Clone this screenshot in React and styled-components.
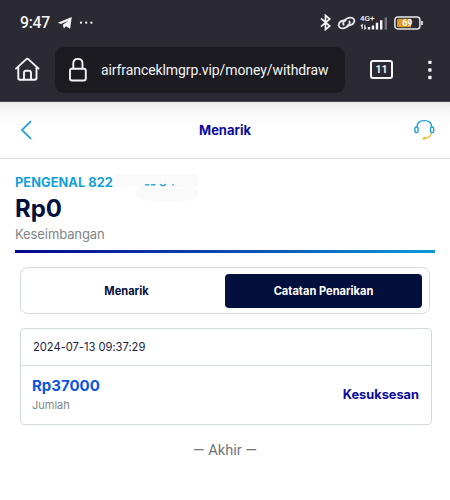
import React from 'react';
import styled, { createGlobalStyle } from 'styled-components'

const GlobalStyle = createGlobalStyle`
  * {
    box-sizing:border-box;
  }
  body {
    margin:0;
    background:#fff;
    font-family:Inter, "Liberation Sans", sans-serif;
    overflow:hidden;
  }
`
const Screen = styled.div`
  width:450px;
  height:500px;
  background:#fff;
`
const BrowserChrome = styled.div`
  height:102px;
  background:#2b2a33;
  border-bottom:1px solid #48464f;
  color:#f4f4f6;
  font-family:Roboto, sans-serif;
`
const StatusBar = styled.div`
  display:flex;
  align-items:center;
  height:45px;
  padding:0 26px 0 20px;
`
const Clock = styled.span`
  width:37px;
  font-size:15.8px;
  line-height:18px;
  letter-spacing:-0.3px;
  font-weight:500;
`
const StatusIcons = styled.div`
  display:flex;
  align-items:center;
  margin-left:auto;
`
const Toolbar = styled.div`
  display:flex;
  align-items:center;
  height:49px;
  padding:0 17px 0 14px;
`
const AddressBar = styled.div`
  display:flex;
  align-items:center;
  width:290px;
  height:46px;
  margin-left:14px;
  padding-left:13px;
  border-radius:9px;
  background:#1c1b22;
`
const Url = styled.span`
  margin-left:13px;
  font-size:14px;
  letter-spacing:-0.09px;
  white-space:nowrap;
`
const TabCount = styled.div`
  display:flex;
  align-items:center;
  justify-content:center;
  width:23px;
  height:19px;
  margin-left:25px;
  border:2px solid #f4f4f6;
  border-radius:3px;
  font-size:10.5px;
  font-weight:700;
`
const MenuDots = styled.svg`
  margin-left:auto;
`
const PageHeader = styled.header`
  display:flex;
  align-items:center;
  justify-content:space-between;
  height:57px;
  padding:0 15px 0 20px;
  border-bottom:1px solid #dfe0e2;
  background:linear-gradient(#e9e9ea 0, #f6f6f6 7px, #fcfcfc 17px, #fff 26px);
`
const Title = styled.h1`
  margin:0 0 0 2px;
  font-size:13px;
  font-weight:700;
  color:#0b0a9c;
`
const Balance = styled.section`
  height:94px;
  margin:0 15px;
  padding-top:14px;
  border-bottom:3px solid;
  border-image:linear-gradient(90deg, #06068f, #0b4fb6 55%, #0d9bdb) 1;
`
const AccountRow = styled.div`
  display:flex;
  height:18px;
`
const AccountId = styled.span`
  width:98px;
  font-size:12.8px;
  line-height:19px;
  font-weight:700;
  letter-spacing:0.06px;
  white-space:nowrap;
  color:#149fd7;
`
const Smudge = styled.svg`
  flex:none;
  overflow:visible;
`
const Amount = styled.div`
  height:34px;
  font-size:24px;
  line-height:36px;
  font-weight:700;
  letter-spacing:-0.1px;
  color:#030f3c;
`
const Caption = styled.div`
  font-size:${props => props.$size};
  line-height:18px;
  letter-spacing:${props => props.$spacing || '0'};
  color:#808488;
`
const Tabs = styled.div`
  display:flex;
  align-items:center;
  width:410px;
  height:47px;
  margin:14px 0 0 20px;
  padding:0 7px;
  border:1px solid #d5dade;
  border-radius:8px;
`
const Tab = styled.button`
  width:197px;
  height:34px;
  padding:0;
  border:none;
  border-radius:4px;
  background:${props => props.$active ? '#030f3c' : 'transparent'};
  color:${props => props.$active ? '#fff' : '#030f3c'};
  font-family:inherit;
  font-size:11.1px;
  font-weight:700;
`
const RecordCard = styled.div`
  width:412px;
  height:97px;
  margin:14px 0 0 20px;
  border:1px solid #d5dade;
  border-radius:4px;
`
const RecordDate = styled.div`
  height:37px;
  padding-left:12px;
  border-bottom:1px solid #d5dade;
  font-size:11.2px;
  line-height:37px;
  letter-spacing:-0.03px;
  color:#1b2342;
`
const RecordBody = styled.div`
  display:flex;
  align-items:center;
  justify-content:space-between;
  height:58px;
  padding:0 12px 0 11px;
`
const RecordAmount = styled.div`
  font-size:15px;
  line-height:20px;
  font-weight:700;
  color:#0b55df;
`
const RecordStatus = styled.div`
  padding-bottom:2px;
  font-size:12.8px;
  font-weight:700;
  color:#0b0a9c;
`
const EndNote = styled.p`
  margin:15px 0 0;
  font-family:Roboto, sans-serif;
  font-size:14.6px;
  line-height:20px;
  letter-spacing:0.05px;
  text-align:center;
  color:#71757a;
`

const LinkIcon = () => (
  <svg width="29" height="16" viewBox="0 0 29 16" fill="none" stroke="#e9e9ec" strokeWidth="1.8" strokeLinecap="round">
    <path d="M12.6 9.8C11.2 7.2 14.5 3 18.6 2.6c4-.4 5.8 2.4 4.2 5-1.3 2.2-4 3-6.3 2.7" />
    <path d="M18.4 6.4c1.4 2.6-1.9 6.5-6 6.9-4 .4-5.8-2.4-4.2-5 1.3-2.2 4-3 6.3-2.7" />
  </svg>
)

const BatteryIcon = () => (
  <svg width="30" height="14" viewBox="0 0 30 14">
    <rect x="0.9" y="0.9" width="25" height="12" rx="3" fill="none" stroke="#e9e9ec" strokeWidth="1.5" />
    <path d="M4.5 2.8H17v8.4H4.5Q3 11.2 3 9.7V4.3Q3 2.8 4.5 2.8Z" fill="#e39a24" />
    <path d="M28 5v4" stroke="#e9e9ec" strokeWidth="1.7" />
    <text x="13.2" y="10.1" textAnchor="middle" fontFamily="Roboto" fontSize="8.8" fontWeight="700" fill="#fff">69</text>
  </svg>
)

const SignalIcon = () => (
  <svg width="29" height="16" viewBox="0 0 29 16">
    <text x="0" y="6.4" fontFamily="Roboto" fontSize="8" fontWeight="500" fill="#f4f4f6">4G+</text>
    <path d="M2.2 14V9.8L.8 11.2M4.8 9.8V14l1.4-1.4" fill="none" stroke="#f4f4f6" strokeWidth="1.1" />
    <path d="M9 12v2.6M13 10.4v4.2M17 7.8v6.8M21.2 5.2v9.4" stroke="#f4f4f6" strokeWidth="2.4" strokeLinecap="butt" />
    <path d="M25.8 2.4v12.2" stroke="#74737a" strokeWidth="2.4" />
  </svg>
)

const Gap = styled.span`
  width:5px;
`

class App extends React.PureComponent {
  render() {
    return (
      <Screen>
        <GlobalStyle />
        <BrowserChrome>
          <StatusBar>
            <Clock>9:47</Clock>
            <svg width="37" height="14" viewBox="0 0 37 14">
              <path d="M.8 6.8 14.8 1 13.1 12.8 9 10.3 6.8 12.5 5.8 8.7 11.6 4.4 4 7.9Z" fill="#f4f4f6" />
              <g fill="#f4f4f6">
                <circle cx="24" cy="6.7" r="1.15" />
                <circle cx="29.2" cy="6.7" r="1.15" />
                <circle cx="34.4" cy="6.7" r="1.15" />
              </g>
            </svg>
            <StatusIcons>
              <svg width="11" height="17" viewBox="0 0 11 17" fill="none" stroke="#f4f4f6" strokeWidth="1.7">
                <path d="M1 4.4 9.7 12 5.5 15.6V1.4L9.7 5 1 12.6" />
              </svg>
              <LinkIcon />
              <SignalIcon />
              <Gap />
              <BatteryIcon />
            </StatusIcons>
          </StatusBar>
          <Toolbar>
            <svg width="27" height="27" viewBox="0 0 27 27" fill="none" stroke="#f4f4f6" strokeWidth="1.9" strokeLinejoin="round" strokeLinecap="round">
              <path d="M2 12.6 12.1 3.4Q13.3 2.3 14.5 3.4L24.6 12.6M4.3 11.3V22Q4.3 23.7 6 23.7H20.8Q22.5 23.7 22.5 22V11.3" />
              <path d="M10 23.3V17Q10 14.7 12.1 14.7H14.8Q17 14.7 17 17V23.3" />
            </svg>
            <AddressBar>
              <svg width="20" height="26" viewBox="0 0 20 26" fill="none" stroke="#f4f4f6" strokeWidth="1.9">
                <rect x="2" y="11.8" width="15.8" height="11.7" rx="2" />
                <path d="M5.3 11.8V6.5Q5.3 1.9 9.9 1.9Q14.5 1.9 14.5 6.5V11.8" />
              </svg>
              <Url>airfranceklmgrp.vip/money/withdraw</Url>
            </AddressBar>
            <TabCount>11</TabCount>
            <MenuDots width="6" height="20" viewBox="0 0 6 20" fill="#f4f4f6">
              <rect x="1.2" y="0.7" width="3.4" height="3.4" rx="1" />
              <rect x="1.2" y="8.3" width="3.4" height="3.4" rx="1" />
              <rect x="1.2" y="15.8" width="3.4" height="3.4" rx="1" />
            </MenuDots>
          </Toolbar>
        </BrowserChrome>
        <PageHeader>
          <svg width="14" height="20" viewBox="0 0 14 20" fill="none" stroke="#149fd7" strokeWidth="1.7">
            <path d="M11 1.2 2 10l9 8.8" />
          </svg>
          <Title>Menarik</Title>
          <svg width="21" height="22" viewBox="0 0 21 22" fill="none" stroke="#1c9fd3" strokeWidth="1.4">
            <path d="M2.9 8.2C3 3.8 6 1.6 10.3 1.6S17.6 3.8 17.7 8.2" />
            <rect x="0.9" y="8" width="3.2" height="5.6" rx="1.5" />
            <rect x="16.5" y="8" width="3.2" height="5.6" rx="1.5" />
            <path d="M17.4 14c-.4 3.2-3 5-6.8 5.2" stroke="#f3b52b" />
            <circle cx="10.4" cy="19.2" r="1.5" fill="#f3b52b" stroke="none" />
          </svg>
        </PageHeader>
        <Balance>
          <AccountRow>
            <AccountId>PENGENAL 822</AccountId>
            <Smudge width="88" height="18" viewBox="0 0 88 18">
              <path d="M6 7.5H80M29 20Q50 24 79 20.5" fill="none" stroke="#fafafa" strokeWidth="13" strokeLinecap="round" />
              <path d="M32 11.8h4.5M38 11.8h4.5M47 11.2Q50 14 53 11.2M60 11v1.5" fill="none" stroke="#35a9d8" strokeWidth="1.5" />
            </Smudge>
          </AccountRow>
          <Amount>Rp0</Amount>
          <Caption $size="13px" $spacing="-0.1px">Keseimbangan</Caption>
        </Balance>
        <Tabs>
          <Tab>Menarik</Tab>
          <Tab $active>Catatan Penarikan</Tab>
        </Tabs>
        <RecordCard>
          <RecordDate>2024-07-13 09:37:29</RecordDate>
          <RecordBody>
            <div>
              <RecordAmount>Rp37000</RecordAmount>
              <Caption $size="11px">Jumlah</Caption>
            </div>
            <RecordStatus>Kesuksesan</RecordStatus>
          </RecordBody>
        </RecordCard>
        <EndNote>— Akhir —</EndNote>
      </Screen>
    )
  }
}

export default App
